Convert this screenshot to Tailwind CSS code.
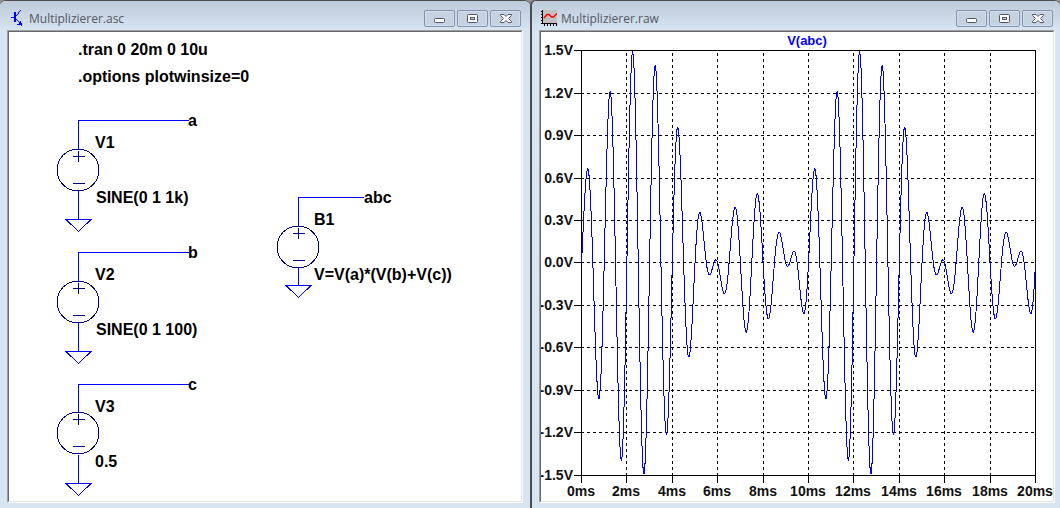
<!DOCTYPE html>
<html lang="de">
<head>
  <meta charset="UTF-8" />
  <meta name="viewport" content="width=device-width, initial-scale=1.0" />
  <title>Multiplizierer</title>
  <script src="https://cdn.jsdelivr.net/npm/@tailwindcss/browser@4"></script>
</head>
<body class="bg-[#8f8f8f] h-screen grid grid-cols-2 overflow-hidden">

  <svg class="hidden">
    <symbol id="iconMin" viewBox="0 0 12 12">
      <rect x="0.5" y="6.5" width="10" height="4" rx="1" fill="#fff" stroke="#535666" />
    </symbol>
    <symbol id="iconMax" viewBox="0 0 12 12">
      <rect x="0.5" y="1.5" width="10" height="8" rx="1" fill="#fff" stroke="#535666" />
      <rect x="3.5" y="4.5" width="4" height="2" fill="#c5d2e2" stroke="#535666" />
    </symbol>
    <symbol id="iconClose" viewBox="0 0 12 12">
      <path d="M0.500 1.500h3.500L6 3.500 8 1.500h3.500v1L8.500 5.500l3 3v1H8L6 7.500 4 9.500H0.500v-1l3-3-3-3z" fill="#fff" stroke="#535666" stroke-linejoin="round" />
    </symbol>
  </svg>

  <!-- Schaltplan -->
  <section class="min-w-0 flex flex-col bg-[#d7e4f2] border-t border-[#4e4a4d] rounded-t-md px-[7px] pb-[5px]">
    <header class="-mx-[7px] pl-[10px] pr-[9px] h-[29px] shrink-0 flex items-start gap-[3px] bg-linear-to-b from-[#bdcad9] to-[#d7e4f2] rounded-t-md">
      <svg class="size-4 mt-[9px]" viewBox="0 0 16 16" fill="#0000ff" shape-rendering="crispEdges">
        <path d="M1 7h3v1H1zM4 2h2v10H4zM10 0h1v1h-1zM9 1h1v1H9zM8 2h1v2H8zM7 4h1v1H7zM6 5h1v1H6z" />
        <path d="M6 9h1v1H6zM7 10h1v1H7zM8 11h1v1H8zM9 12h1v-1h1v2h1v1h-1v1H7v-1h2v-1h0zM11 14h1v2h-1z" />
      </svg>
      <h1 class="flex-1 font-['Open_Sans','Noto_Sans',sans-serif] text-[12px] leading-4 mt-[10px] text-[#51565f]">Multiplizierer.asc</h1>
      <div class="flex gap-[2px] mt-[9px]">
        <button aria-label="Minimieren" class="w-[31px] h-[17px] border border-[#8492b0] rounded-xs bg-[#c5d2e2] shadow-[inset_0_0_0_1px_#d3deeb] flex justify-center pt-px"><svg class="size-3"><use href="#iconMin" /></svg></button>
        <button aria-label="Maximieren" class="w-[31px] h-[17px] border border-[#8492b0] rounded-xs bg-[#c5d2e2] shadow-[inset_0_0_0_1px_#d3deeb] flex justify-center pt-[2px]"><svg class="size-3"><use href="#iconMax" /></svg></button>
        <button aria-label="Schließen" class="w-[31px] h-[17px] border border-[#8492b0] rounded-xs bg-[#c5d2e2] shadow-[inset_0_0_0_1px_#d3deeb] flex justify-center pt-[2px]"><svg class="size-3"><use href="#iconClose" /></svg></button>
      </div>
    </header>

    <div class="flex-1 min-h-0 border border-t-[#a0a0a0] border-l-[#a0a0a0] border-r-white border-b-white">
      <div class="h-full border border-t-[#696969] border-l-[#696969] border-r-[#e3e3e3] border-b-[#e3e3e3] bg-white">
        <svg class="block size-full font-['Liberation_Sans',Arial,sans-serif] font-bold text-[16px]" fill="#000">
          <defs>
            <g id="source" fill="none" stroke="#000080" shape-rendering="crispEdges">
              <circle cx="0" cy="50" r="21" />
              <path d="M-5 36.500H7M0.500 31v11M-5 63.500H7" />
            </g>
            <path id="ground" d="M-12 0.500H13L0.500 12.500z" fill="none" stroke="#0000ff" shape-rendering="crispEdges" />
          </defs>

          <text x="69" y="23">.tran 0 20m 0 10u</text>
          <text x="69" y="50">.options plotwinsize=0</text>

          <g transform="translate(69 88)">
            <path d="M111 0.500H0.500V29M0.500 71V99" fill="none" stroke="#0000ff" shape-rendering="crispEdges" />
            <use href="#source" />
            <use href="#ground" y="99" />
            <text x="110" y="6">a</text>
            <text x="17" y="28">V1</text>
            <text x="18" y="83">SINE(0 1 1k)</text>
          </g>

          <g transform="translate(69 220)">
            <path d="M111 0.500H0.500V29M0.500 71V99" fill="none" stroke="#0000ff" shape-rendering="crispEdges" />
            <use href="#source" />
            <use href="#ground" y="99" />
            <text x="110" y="6">b</text>
            <text x="17" y="28">V2</text>
            <text x="18" y="83">SINE(0 1 100)</text>
          </g>

          <g transform="translate(69 352)">
            <path d="M111 0.500H0.500V29M0.500 71V99" fill="none" stroke="#0000ff" shape-rendering="crispEdges" />
            <use href="#source" y="-1" />
            <use href="#ground" y="99" />
            <text x="110" y="6">c</text>
            <text x="17" y="28">V3</text>
            <text x="17" y="83">0.5</text>
          </g>

          <g transform="translate(289 165)">
            <path d="M66 0.500H0.500V29M0.500 71V88" fill="none" stroke="#0000ff" shape-rendering="crispEdges" />
            <use href="#source" />
            <use href="#ground" y="88" />
            <text x="66" y="6">abc</text>
            <text x="16" y="28">B1</text>
            <text x="16" y="83">V=V(a)*(V(b)+V(c))</text>
          </g>
        </svg>
      </div>
    </div>
  </section>

  <!-- Kurvenfenster -->
  <section class="min-w-0 flex flex-col bg-[#d7e4f2] border-t border-l-2 border-[#4e4a4d] rounded-t-md pl-[7px] pr-[5px] pb-[5px]">
    <header class="-ml-[7px] -mr-[5px] pl-[9px] pr-[7px] h-[29px] shrink-0 flex items-start gap-[4px] bg-linear-to-b from-[#bdcad9] to-[#d7e4f2] rounded-t-md">
      <svg class="size-4 mt-[9px]" viewBox="0 0 16 16" fill="none" shape-rendering="crispEdges">
        <rect x="2" width="14" height="13" fill="#c0c0c0" />
        <path d="M1.500 0v14M1 13.500h15" stroke="#000" />
        <path d="M0 1.500h1M0 4.500h1M0 7.500h1M0 10.500h1M0 13.500h1M3.500 14v2M6.500 14v2M9.500 14v2M12.500 14v2M15.500 14v2" stroke="#000" />
        <path d="M3 8L6 4.500l2 0L10.500 7l2 0L16 3.500" stroke="#ff0000" stroke-width="1.500" shape-rendering="auto" />
      </svg>
      <h1 class="flex-1 font-['Open_Sans','Noto_Sans',sans-serif] text-[12px] leading-4 mt-[10px] text-[#51565f]">Multiplizierer.raw</h1>
      <div class="flex gap-[2px] mt-[9px]">
        <button aria-label="Minimieren" class="w-[31px] h-[17px] border border-[#8492b0] rounded-xs bg-[#c5d2e2] shadow-[inset_0_0_0_1px_#d3deeb] flex justify-center pt-px"><svg class="size-3"><use href="#iconMin" /></svg></button>
        <button aria-label="Maximieren" class="w-[31px] h-[17px] border border-[#8492b0] rounded-xs bg-[#c5d2e2] shadow-[inset_0_0_0_1px_#d3deeb] flex justify-center pt-[2px]"><svg class="size-3"><use href="#iconMax" /></svg></button>
        <button aria-label="Schließen" class="w-[31px] h-[17px] border border-[#8492b0] rounded-xs bg-[#c5d2e2] shadow-[inset_0_0_0_1px_#d3deeb] flex justify-center pt-[2px]"><svg class="size-3"><use href="#iconClose" /></svg></button>
      </div>
    </header>

    <div class="flex-1 min-h-0 border border-t-[#a0a0a0] border-l-[#a0a0a0] border-r-white border-b-white">
      <div class="h-full border border-t-[#696969] border-l-[#696969] border-r-[#e3e3e3] border-b-[#e3e3e3] bg-white">
        <svg id="plot" class="block size-full font-['Liberation_Sans',Arial,sans-serif] font-bold text-[14px]" fill="#111">
          <text x="266" y="13" text-anchor="middle" fill="#0000ff" class="text-[13px]">V(abc)</text>
          <g fill="none" shape-rendering="crispEdges">
            <path id="grid" stroke="#000" stroke-dasharray="3 3" />
            <path id="axes" stroke="#000" />
            <path id="trace" stroke="#0000ff" />
          </g>
          <g id="yLabels" text-anchor="end"></g>
          <g id="xLabels" text-anchor="middle"></g>
        </svg>
      </div>
    </div>
  </section>

  <script>
    const LEFT = 40, TOP = 18, WIDTH = 454, HEIGHT = 425;
    const yLabels = document.getElementById("yLabels");
    const xLabels = document.getElementById("xLabels");

    function addLabel(parent, x, y, txt) {
      const el = document.createElementNS("http://www.w3.org/2000/svg", "text");
      el.setAttribute("x", x);
      el.setAttribute("y", y);
      el.textContent = txt;
      parent.appendChild(el);
    }

    let grid = "";
    let axes = `M${LEFT + 0.5} ${TOP + 0.5}h${WIDTH}v${HEIGHT}h-${WIDTH}z`;

    for (let i = 0; i <= 10; i++) {
      const x = LEFT + Math.round(i * WIDTH / 10);
      const y = TOP + Math.round(i * 42.48 + 0.07);
      if (i > 0 && i < 10) {
        grid += `M${x + 0.5} ${TOP + 3}V${TOP + HEIGHT}M${LEFT} ${y + 0.5}H${LEFT + WIDTH}`;
      }
      axes += `M${x + 0.5} ${TOP + HEIGHT}v8M${LEFT} ${y + 0.5}h-7`;
      addLabel(yLabels, LEFT - 8, y + 5, (1.5 - i * 0.3).toFixed(1).replace("-0.0", "0.0") + "V");
      addLabel(xLabels, x, TOP + HEIGHT + 21, i * 2 + "ms");
    }

    // V(a) * (V(b) + V(c)), t in ms
    let trace = "";
    for (let n = 0; n <= 2000; n++) {
      const t = n / 100;
      const v = Math.sin(2 * Math.PI * t) * (Math.sin(0.2 * Math.PI * t) + 0.5);
      const x = LEFT + 0.5 + t / 20 * WIDTH;
      const y = TOP + 0.5 + (1.5 - v) / 3 * HEIGHT;
      trace += (n ? "L" : "M") + x.toFixed(2) + " " + y.toFixed(2);
    }

    document.getElementById("grid").setAttribute("d", grid);
    document.getElementById("axes").setAttribute("d", axes);
    document.getElementById("trace").setAttribute("d", trace);
  </script>
</body>
</html>
